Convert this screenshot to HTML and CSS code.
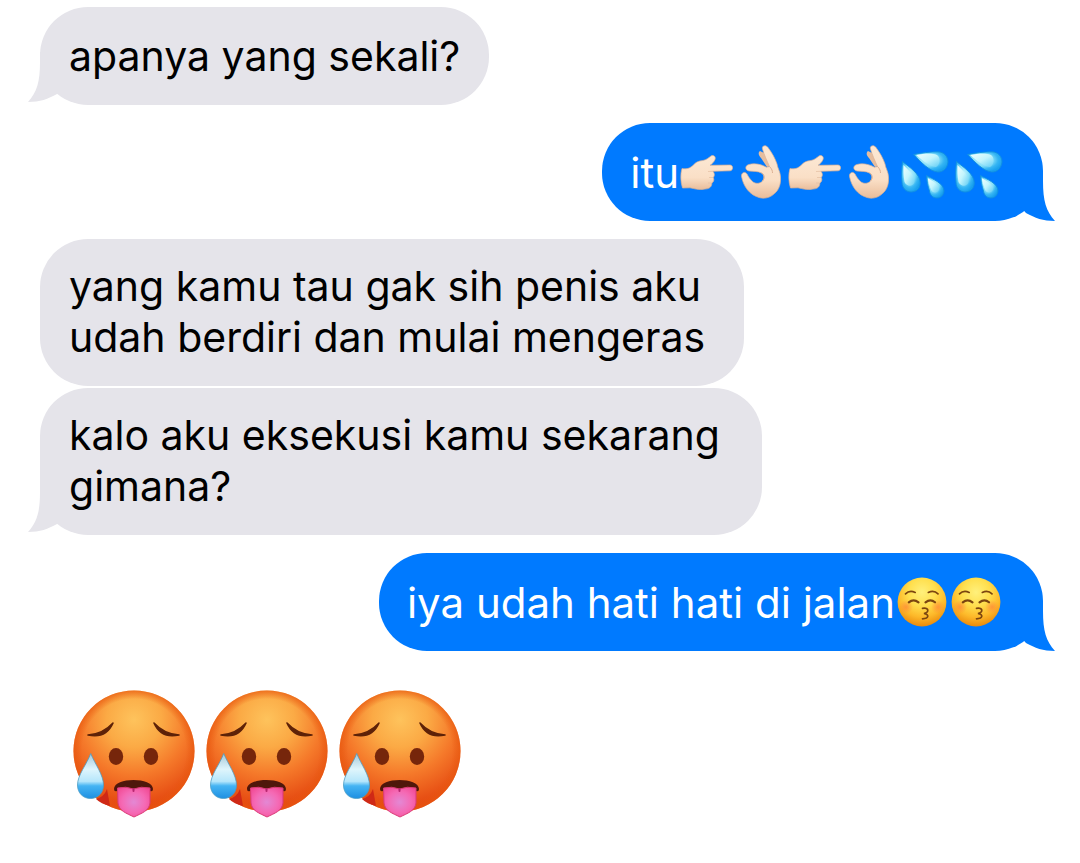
FILE: index.html
```html
<!DOCTYPE html>
<html lang="id">
<head>
<meta charset="UTF-8" />
<meta name="viewport" content="width=device-width, initial-scale=1" />
<title>Messages</title>
<link rel="stylesheet" href="styles.css">
</head>
<body>

<!-- Emoji and tail shapes -->
<svg class="defs" width="0" height="0" aria-hidden="true">
  <defs>
    <linearGradient id="skin" x1="0" y1="0" x2="0" y2="1">
      <stop offset="0" stop-color="#fce8d4" />
      <stop offset="0.65" stop-color="#fadfc6" />
      <stop offset="1" stop-color="#e9bd9b" />
    </linearGradient>
    <radialGradient id="water" cx="0.42" cy="0.4" r="0.62">
      <stop offset="0" stop-color="#c4f5ff" />
      <stop offset="0.5" stop-color="#7fdcf8" />
      <stop offset="0.75" stop-color="#35b5f3" />
      <stop offset="1" stop-color="#18a0ee" />
    </radialGradient>
    <linearGradient id="shine" x1="0" y1="0" x2="1" y2="1">
      <stop offset="0" stop-color="#f0ffff" />
      <stop offset="0.5" stop-color="#c3f5fd" />
      <stop offset="1" stop-color="#62cdf5" />
    </linearGradient>
    <radialGradient id="yellow" cx="0.5" cy="0.3" r="0.7">
      <stop offset="0" stop-color="#fff07c" />
      <stop offset="0.4" stop-color="#ffdf4e" />
      <stop offset="0.72" stop-color="#fdb92a" />
      <stop offset="1" stop-color="#ea8a0c" />
    </radialGradient>
    <radialGradient id="blush">
      <stop offset="0" stop-color="#ff7a3c" stop-opacity="0.6" />
      <stop offset="1" stop-color="#ff7a3c" stop-opacity="0" />
    </radialGradient>
    <radialGradient id="heat" cx="0.5" cy="0.24" r="0.76">
      <stop offset="0" stop-color="#fec35c" />
      <stop offset="0.3" stop-color="#fbaa45" />
      <stop offset="0.6" stop-color="#f5792a" />
      <stop offset="1" stop-color="#e2400c" />
    </radialGradient>
    <radialGradient id="rim">
      <stop offset="0.86" stop-color="#e8590f" stop-opacity="0" />
      <stop offset="1" stop-color="#e8590f" stop-opacity="0.7" />
    </radialGradient>
    <linearGradient id="sweat" x1="0" y1="0" x2="0" y2="1">
      <stop offset="0" stop-color="#a5c8d8" />
      <stop offset="0.35" stop-color="#dff5fc" />
      <stop offset="0.62" stop-color="#b5e6fb" />
      <stop offset="0.72" stop-color="#45b4f3" />
      <stop offset="1" stop-color="#1e8fe2" />
    </linearGradient>
    <radialGradient id="tongue" cx="0.5" cy="0.5" r="0.6">
      <stop offset="0" stop-color="#e388d4" />
      <stop offset="0.6" stop-color="#f569b4" />
      <stop offset="1" stop-color="#f24e98" />
    </radialGradient>
  </defs>

  <symbol id="point" viewBox="0 0 54 54">
    <path fill="url(#skin)" stroke="#dbb093" stroke-width="0.7" d="M3 23.5C8 24.5 11 23 14 20.500C17 17 19 16 24 15.500C28 14.500 29 13 32 11C35 9.500 37 12 36 14.500C35 17 33 19 31 20.300L51 20C54.500 20 54.500 25.600 51 25.800L34 26.300C36 29 35.500 31 34.300 32.500C35.500 35 34.500 37 32.800 38C33 42 30 44 26 44C20 45.500 15 43.500 11 42.800L3.500 43C1.500 37 1.300 29 3 23.500Z" />
    <path fill="none" stroke="#e6c2a6" stroke-width="0.8" d="M29 26.500L34 26.300M30 32.500L34 32.500M29 38L32.500 38" />
  </symbol>

  <symbol id="ok" viewBox="0 0 54 54">
    <path fill="#e6bd9e" d="M27 6C24.500 8 26 11 28 13L34 22L40 20L31 8Z" />
    <path fill="url(#skin)" stroke="#dbb093" stroke-width="0.7" d="M29.500 4C28.500 0.500 33 -0.500 35 2.500C39 8 42 13 44 19C44.500 23 47.500 27 47.500 32C48 39 46 45 41.500 48.500C37 53 31 54 26 52.500C17 50 10.500 42 8.500 31.500C8 27.500 12 26 14 29C15.500 32 17 34 19.500 36.500C22 39 27 39 29.500 36C32 33 31 29.500 28.500 28C25 26 20 26.500 16 26C11.500 25 12 20.500 16 19.500C21 18 28 19 33.500 22.300L36.500 21.500C34 16 31 9.500 29.500 4Z" />
    <path fill="none" stroke="#dcb093" stroke-width="1" d="M36.500 21.500C39 24 39.500 26 39.500 28M28.500 28C31.500 29.500 32 33 29.500 36" />
  </symbol>

  <symbol id="drops" viewBox="0 0 54 54">
    <g fill="url(#water)" stroke="#1290e0" stroke-width="0.9">
      <path d="M7.500 16.500C14 22 25.500 29 25.300 38C25 44 21 47 16 47C11 47 7 43 7 37.500C6.500 31 6.500 23 7.500 16.500Z" />
      <path d="M18.500 9.500C25 8 36 6.800 43 6.800C49 7 53 11.500 53 17C52.500 23 48 27.500 42.500 27C34 26 26 17 18.500 9.500Z" />
      <path d="M31.500 30.500C37 34 49 38 49 46C48.500 50 46 53 42 53C37.500 53 35 50 34.500 46C33 41 31.500 36 31.500 30.500Z" />
    </g>
    <g fill="url(#shine)">
      <path d="M8.500 20C14 26 20 31 19.500 37C18 42 12 42 9.500 37C8.500 31 8.300 26 8.500 20Z" />
      <path d="M21 10C29 9 36 8 42 10C46 13 45 20 41 22C34 21 27 15 21 10Z" />
      <path d="M32.800 33C38 36 44.500 40 44 44.500C42.500 49 37 48 36 44.500C34.500 41 33 37 32.800 33Z" />
    </g>
  </symbol>

  <symbol id="kiss" viewBox="0 0 54 54">
    <circle cx="27" cy="27" r="24.400" fill="url(#yellow)" />
    <circle cx="11" cy="32" r="7" fill="url(#blush)" />
    <circle cx="43" cy="32" r="7" fill="url(#blush)" />
    <g fill="none" stroke="#7b4510" stroke-width="1.700" stroke-linecap="round">
      <path d="M10.500 18.800Q14.500 14.800 20.200 17.400M33.300 17.400Q39 14.800 43 18.800" />
      <path stroke-width="2.200" d="M13.800 27.300Q18.500 23.300 23.500 27.300M30.500 27.300Q35.500 23.300 40 27.300" />
      <path d="M27.500 33.300C34 32.500 34.500 37 29 38.500C34.500 39.500 34 43.500 27.500 43.800" />
    </g>
  </symbol>

  <symbol id="hot" viewBox="0 0 133 136">
    <circle cx="67" cy="66" r="60.500" fill="url(#heat)" />
    <circle cx="67" cy="66" r="60.500" fill="url(#rim)" />
    <path fill="#cf2916" d="M29 114Q37 112 40 104L43 121Q34 119 29 114Z" />
    <g fill="#5e2208" stroke="#5e2208" stroke-width="1.600" stroke-linejoin="round">
      <path d="M21 50Q36 49 46 38Q39 54 21 50ZM87 38Q97 49 112 50Q94 54 87 38Z" />
    </g>
    <ellipse cx="49" cy="71.500" rx="7.200" ry="8.500" fill="#76260b" />
    <ellipse cx="84" cy="71.500" rx="7.200" ry="8.500" fill="#76260b" />
    <path fill="#4f170b" d="M47 104C47 92 86 92 86 104Q86 107 83 106L50 106Q47 107 47 104Z" />
    <path fill="url(#tongue)" stroke="#da3b77" stroke-width="1" d="M50.500 103Q59 101 66.500 104Q74 101 83 103L83 118C82 126 75 128 67 132C59 128 52 126 51 118Z" />
    <path fill="none" stroke="#b72670" stroke-width="2" stroke-linecap="round" d="M66.500 104V106" />
    <path fill="url(#sweat)" stroke="#4c9dc4" stroke-width="0.800" d="M23.700 68.500C28 79 36.500 90 36.500 100C36.500 108 31 113.500 23.500 113.500C16 113.500 10.500 108 10.500 100C10.500 90 20 79 23.700 68.500Z" />
  </symbol>

  <symbol id="tail" viewBox="0 0 40 50">
    <path d="M12 0V10C12 30 9 40 0 50C12 50 20 47 29 42L40 30V0Z" />
  </symbol>
</svg>

<main class="chat">
  <div class="message received">
    <svg class="tail"><use href="#tail" /></svg>
    <p>apanya yang sekali?</p>
  </div>

  <div class="message sent">
    <p>itu</p>
    <svg class="emoji" role="img" aria-label="👉🏻"><use href="#point" /></svg>
    <svg class="emoji" role="img" aria-label="👌🏻"><use href="#ok" /></svg>
    <svg class="emoji" role="img" aria-label="👉🏻"><use href="#point" /></svg>
    <svg class="emoji" role="img" aria-label="👌🏻"><use href="#ok" /></svg>
    <svg class="emoji" role="img" aria-label="💦"><use href="#drops" /></svg>
    <svg class="emoji" role="img" aria-label="💦"><use href="#drops" /></svg>
    <svg class="tail"><use href="#tail" /></svg>
  </div>

  <div class="group">
    <div class="message received long">
      <p>yang kamu tau gak sih penis aku<br>udah berdiri dan mulai mengeras</p>
    </div>
    <div class="message received long">
      <svg class="tail"><use href="#tail" /></svg>
      <p>kalo aku eksekusi kamu sekarang gimana?</p>
    </div>
  </div>

  <div class="message sent">
    <p>iya udah hati hati di jalan</p>
    <svg class="emoji" role="img" aria-label="😚"><use href="#kiss" /></svg>
    <svg class="emoji" role="img" aria-label="😚"><use href="#kiss" /></svg>
    <svg class="tail"><use href="#tail" /></svg>
  </div>

  <div class="big-emojis">
    <svg role="img" aria-label="🥵"><use href="#hot" /></svg>
    <svg role="img" aria-label="🥵"><use href="#hot" /></svg>
    <svg role="img" aria-label="🥵"><use href="#hot" /></svg>
  </div>
</main>

</body>
</html>
```
FILE: styles.css
```css
body { margin: 0; background: #fff; color: #000; font-family: Inter, "Liberation Sans", sans-serif; line-height: 51px; }
p { margin: 0; }
.defs { position: absolute; }
.chat {
  display: flex; flex-direction: column; align-items: flex-start; gap: 18px;
  padding: 7px 37px 24px 40px;
}
.group { display: flex; flex-direction: column; align-items: flex-start; gap: 2px; width: 100%; }

/* Bubbles */
.message {
  position: relative; display: flex; align-items: center; box-sizing: border-box;
  min-height: 98px; max-width: 72%; padding: 22px 29px; border-radius: 48px;
}
.received { background: #e5e4ea; font-size: 41px; }
.long { padding: 22px 39px 23px 29px; }
.sent { align-self: flex-end; background: #007aff; color: #fff; font-size: 42px; padding: 22px 40px 22px 28px; }
.tail { position: absolute; width: 40px; height: 50px; }
.received .tail { left: -12px; bottom: 3px; fill: #e5e4ea; }
.sent .tail { right: -12px; bottom: 0; fill: #007aff; transform: scaleX(-1); }

/* Emojis */
.emoji { flex: none; width: 54px; height: 54px; overflow: visible; }
.big-emojis { display: flex; padding: 16px 27px; }
.big-emojis svg { width: 133px; height: 136px; }
```
